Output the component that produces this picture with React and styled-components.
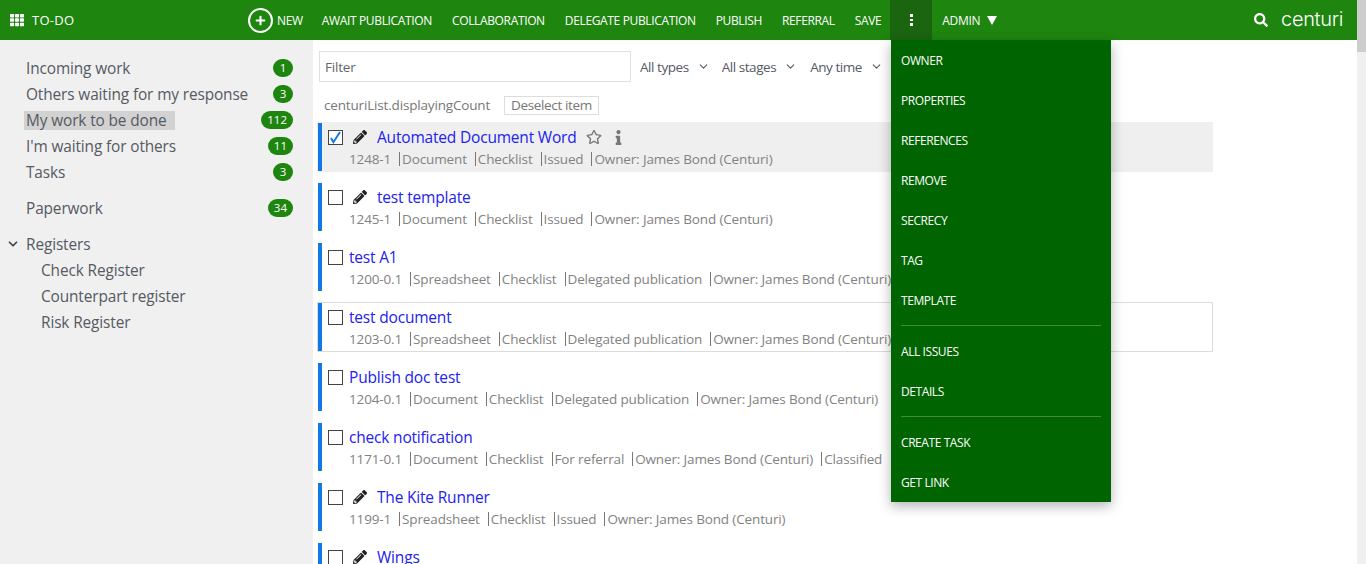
import React from "react";
import styled, { createGlobalStyle } from "styled-components";
import { FaTh, FaPencilAlt, FaRegStar, FaInfo, FaSearch, FaPlus } from "react-icons/fa";
import { FiChevronDown } from "react-icons/fi";

const Global = createGlobalStyle`
  html, body { margin: 0; padding: 0; height: 100%; overflow: hidden; background: #fff; }
  * { box-sizing: border-box; }
  body { font-family: "Open Sans", "Noto Sans", sans-serif; }
`;

const Page = styled.div`display: flex; height: 564px; overflow: hidden;`;
const Viewport = styled.div`flex: 1; min-width: 0; display: flex; flex-direction: column; position: relative;`;
const Scrollbar = styled.div`width: 9px; background: #f0f0f0; flex: none;`;
const ScrollThumb = styled.div`height: 52px; background: #cdcdcd;`;

const TopBar = styled.header`
  height: 40px; flex: none; background: #1e850f; color: #fff; display: flex; align-items: center;
  font-size: 12px; font-weight: 500; letter-spacing: -0.35px; text-transform: uppercase; padding-left: 10px;
`;
const Brand = styled.div`display: flex; align-items: center; width: 238px; font-size: 13px; font-weight: 400; letter-spacing: 0.3px;`;
const BrandLabel = styled.span`margin-left: 8px;`;
const NewButton = styled.div`display: flex; align-items: center; gap: 4px; margin-right: 19px;`;
const PlusCircle = styled.span`
  width: 25px; height: 25px; border: 2px solid #fff; border-radius: 50%; display: flex; align-items: center; justify-content: center;
`;
const NavItem = styled.div`margin-right: ${p => p.$gap ?? 20}px; white-space: nowrap;`;
const MoreButton = styled.div`
  width: 42px; height: 40px; background: #1b6510; display: flex; flex-direction: column; gap: 2px; align-items: center; justify-content: center;
`;
const Dot = styled.i`width: 2.5px; height: 2.5px; background: #fff; display: block;`;
const Admin = styled.div`display: flex; align-items: center; gap: 7px; margin-left: 10px;`;
const Triangle = styled.svg`display: block;`;
const RightTools = styled.div`margin-left: auto; display: flex; align-items: center; gap: 13px; padding-right: 14px;`;
const Logo = styled.span`font-family: Inter, "Open Sans", sans-serif; font-weight: 300; font-size: 20px; letter-spacing: -0.35px; text-transform: none; line-height: 1; margin-top: -3px;`;

const Body = styled.div`flex: 1; display: flex; min-height: 0;`;
const Sidebar = styled.nav`
  width: 313px; flex: none; background: #f0f0f0; padding: 15px 20px 0 0;
  font-size: 15.4px; letter-spacing: -0.12px; color: #555a63;
`;
const SideRow = styled.div`height: 26px; display: flex; align-items: center; justify-content: space-between; padding-left: ${p => p.$indent ?? 24}px; margin-top: ${p => p.$top ?? 0}px; position: relative;`;
const SideLabel = styled.span`padding: 0 ${p => p.$active ? 8 : 6}px 0 2px; line-height: 19px; background: ${p => p.$active ? "#d2d2d2" : "transparent"};`;
const Count = styled.span`
  min-width: 20px; height: 18px; padding: 0 6px; border-radius: 10px; background: #1e850f; color: #fff;
  font-size: 11.5px; letter-spacing: 0; text-align: center; line-height: 18px; font-weight: 400;
`;
const Caret = styled.span`position: absolute; left: 6px; top: 6px; display: flex; color: #444;`;

const Main = styled.main`flex: 1; min-width: 0; padding: 11px 0 0 5px; overflow: hidden;`;
const FilterRow = styled.div`display: flex; align-items: center; height: 31px;`;
const FilterInput = styled.div`
  width: 312px; height: 31px; border: 1px solid #e0e0e0; padding-left: 5px; font-size: 13.5px; letter-spacing: -0.2px; color: #666; line-height: 30px; margin-left: 1px; flex: none;
`;
const Select = styled.div`
  display: flex; align-items: center; gap: 8px; font-size: 13.5px; letter-spacing: -0.45px; color: #555a63; margin-left: ${p => p.$left}px;
`;
const CountRow = styled.div`display: flex; align-items: center; height: 20px; margin: 13px 0 7px 6px; font-size: 13.5px; letter-spacing: -0.17px; color: #777;`;
const Deselect = styled.span`margin-left: 14px; border: 1px solid #ddd; height: 19px; line-height: 16px; padding: 0 6px; letter-spacing: -0.35px;`;

const Row = styled.article`
  width: 896px; height: 50px; margin: 0 0 10px -1px; border: 1px solid ${p => p.$outlined ? "#dcdcdc" : p.$selected ? "#efefef" : "transparent"};
  background: ${p => p.$selected ? "#efefef" : "#fff"}; flex: none;
`;
const RowInner = styled.div`height: 48px; border-left: 4px solid #0f7ae5; padding: 3px 0 0 6px;`;
const TitleLine = styled.div`display: flex; align-items: center; height: 22px;`;
const Box = styled.span`
  width: 15px; height: 15px; border: 1px solid #444; background: #fff; display: block; flex: none; position: relative;
`;
const Check = styled.svg`position: absolute; left: -1px; top: -1px;`;
const Pencil = styled.span`display: flex; margin-left: 10px; color: #222; margin-right: 10px;`;
const Title = styled.span`font-size: 15.5px; letter-spacing: -0.19px; color: #2222ee; white-space: nowrap; margin-left: ${p => p.$left ?? 0}px;`;
const Star = styled.span`display: flex; margin-left: 9px; color: #777;`;
const Info = styled.span`display: flex; margin-left: 9px; color: #777;`;
const Meta = styled.div`display: flex; margin: 1px 0 0 21px; font-size: 13.5px; letter-spacing: -0.14px; color: #828282; line-height: 20px; white-space: nowrap;`;
const MetaItem = styled.span`
  &:not(:first-child) { margin-left: 8px; padding-left: 3px; position: relative; }
  &:not(:first-child)::before { content: ""; position: absolute; left: 0; top: 3px; height: 14px; width: 1px; background: #777; }
`;

const Menu = styled.div`
  position: absolute; left: 891px; top: 40px; width: 220px; height: 462px; background: #006400; color: #fff; z-index: 5;
  box-shadow: 0 4px 12px rgba(0,0,0,.3); padding: 1px 10px 0;
  font-size: 12px; font-weight: 500; letter-spacing: -0.42px; text-transform: uppercase;
`;
const MenuItem = styled.div`height: 40px; line-height: 40px;`;
const MenuDivider = styled.div`height: 1px; background: rgba(255,255,255,.25); margin: 4px 0 6px;`;

const nav = ["Await publication", "Collaboration", "Delegate publication", "Publish", "Referral"];
const side1 = [["Incoming work", "1"], ["Others waiting for my response", "3"], ["My work to be done", "112", true], ["I'm waiting for others", "11"], ["Tasks", "3"]];
const docs = [
  { t: "Automated Document Word", m: ["1248-1", "Document", "Checklist", "Issued", "Owner: James Bond (Centuri)"], pen: true, sel: true },
  { t: "test template", m: ["1245-1", "Document", "Checklist", "Issued", "Owner: James Bond (Centuri)"], pen: true },
  { t: "test A1", m: ["1200-0.1", "Spreadsheet", "Checklist", "Delegated publication", "Owner: James Bond (Centuri)"] },
  { t: "test document", m: ["1203-0.1", "Spreadsheet", "Checklist", "Delegated publication", "Owner: James Bond (Centuri)"], out: true },
  { t: "Publish doc test", m: ["1204-0.1", "Document", "Checklist", "Delegated publication", "Owner: James Bond (Centuri)"] },
  { t: "check notification", m: ["1171-0.1", "Document", "Checklist", "For referral", "Owner: James Bond (Centuri)", "Classified"] },
  { t: "The Kite Runner", m: ["1199-1", "Spreadsheet", "Checklist", "Issued", "Owner: James Bond (Centuri)"], pen: true },
  { t: "Wings", m: [], pen: true },
];
const menu1 = ["Owner", "Properties", "References", "Remove", "Secrecy", "Tag", "Template"];

export default function App() {
  return (
    <Page>
      <Global />
      <Viewport>
        <TopBar>
          <Brand><FaTh size={14} /><BrandLabel>To-Do</BrandLabel></Brand>
          <NewButton><PlusCircle><FaPlus size={11} /></PlusCircle>New</NewButton>
          {nav.map(n => <NavItem key={n}>{n}</NavItem>)}
          <NavItem $gap={9}>Save</NavItem>
          <MoreButton><Dot /><Dot /><Dot /></MoreButton>
          <Admin>Admin
            <Triangle width="10" height="9" viewBox="0 0 10 9"><path d="M0 0h10L5 9z" fill="#fff" /></Triangle>
          </Admin>
          <RightTools><FaSearch size={14} /><Logo>centuri</Logo></RightTools>
        </TopBar>
        <Body>
          <Sidebar>
            {side1.map(([l, c, a]) => <SideRow key={l}><SideLabel $active={a}>{l}</SideLabel><Count>{c}</Count></SideRow>)}
            <SideRow $top={10}><SideLabel>Paperwork</SideLabel><Count>34</Count></SideRow>
            <SideRow $top={10}><Caret><FiChevronDown size={14} strokeWidth={3} /></Caret><SideLabel>Registers</SideLabel></SideRow>
            <SideRow $indent={39}><SideLabel>Check Register</SideLabel></SideRow>
            <SideRow $indent={39}><SideLabel>Counterpart register</SideLabel></SideRow>
            <SideRow $indent={39}><SideLabel>Risk Register</SideLabel></SideRow>
          </Sidebar>
          <Main>
            <FilterRow>
              <FilterInput>Filter</FilterInput>
              <Select $left={9}>All types<FiChevronDown size={13} /></Select>
              <Select $left={12}>All stages<FiChevronDown size={13} /></Select>
              <Select $left={13}>Any time<FiChevronDown size={13} /></Select>
            </FilterRow>
            <CountRow>centuriList.displayingCount<Deselect>Deselect item</Deselect></CountRow>
            {docs.map(d => (
              <Row key={d.t} $selected={d.sel} $outlined={d.out}>
                <RowInner>
                  <TitleLine>
                    <Box>{d.sel && (
                      <Check width="15" height="15" viewBox="0 0 15 15"><path d="M3 8l2.4 4.2L12 2" fill="none" stroke="#0f7ae5" strokeWidth="2" /></Check>
                    )}</Box>
                    {d.pen ? <Pencil><FaPencilAlt size={14} /></Pencil> : null}
                    <Title $left={d.pen ? 0 : 6}>{d.t}</Title>
                    {d.sel && <><Star><FaRegStar size={16} /></Star><Info><FaInfo size={15} /></Info></>}
                  </TitleLine>
                  <Meta>{d.m.map(x => <MetaItem key={x}>{x}</MetaItem>)}</Meta>
                </RowInner>
              </Row>
            ))}
          </Main>
        </Body>
        <Menu>
          {menu1.map(m => <MenuItem key={m}>{m}</MenuItem>)}
          <MenuDivider />
          <MenuItem>All issues</MenuItem>
          <MenuItem>Details</MenuItem>
          <MenuDivider />
          <MenuItem>Create task</MenuItem>
          <MenuItem>Get link</MenuItem>
        </Menu>
      </Viewport>
      <Scrollbar><ScrollThumb /></Scrollbar>
    </Page>
  );
}
